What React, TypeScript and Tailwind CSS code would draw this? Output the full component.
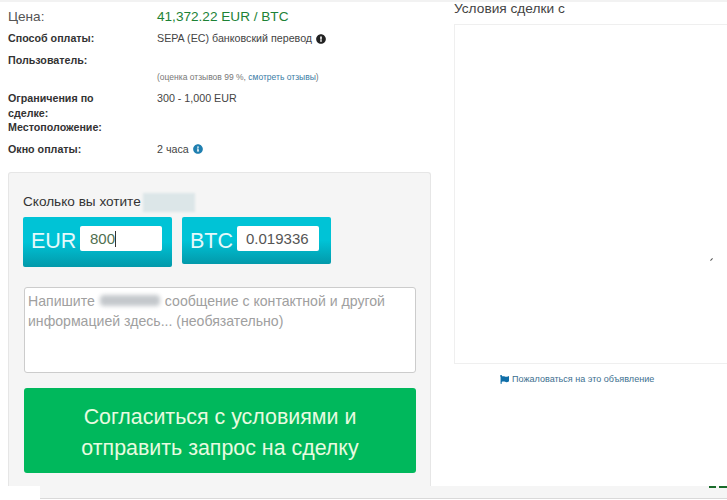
import { FaExclamationCircle, FaFlag, FaInfoCircle } from 'react-icons/fa';

const rowLabel = 'w-[149px] shrink-0 text-[10.7px] font-bold leading-[15px] text-[#333]';
const rowValue = 'text-[10.7px] leading-[15px] text-[#444]';

export default function App() {
  return (
    <div className="flex h-[500px] w-[727px] flex-col overflow-hidden bg-white font-['Liberation_Sans',Arial,sans-serif] text-[#333]">
      <div className="h-[2px] shrink-0 bg-[#f2f2f2]" />

      <div className="flex h-[484px] shrink-0">
        {/* Left column */}
        <div className="w-[446px] shrink-0 pl-2">
          <div className="flex items-center pt-[6px]">
            <div className="w-[149px] shrink-0 text-[13.6px] leading-[17px] text-[#555]">Цена:</div>
            <div className="text-[13.6px] leading-[17px] text-[#1d8236]">41,372.22 EUR / BTC</div>
          </div>

          <div className="mt-[6px] flex">
            <div className={rowLabel}>Способ оплаты:</div>
            <div className={`${rowValue} flex items-center gap-[4px]`}>
              SEPA (ЕС) банковский перевод
              <FaExclamationCircle className="text-[10px] text-[#222]" />
            </div>
          </div>

          <div className="mt-[7px] flex">
            <div className={rowLabel}>Пользователь:</div>
          </div>

          <div className="mt-[4px] flex">
            <div className="w-[149px] shrink-0" />
            <div className="text-[8.5px] leading-[11px] text-[#777]">
              (оценка отзывов 99 %, <span className="text-[#3a7ca5]">смотреть отзывы</span>)
            </div>
          </div>

          <div className="mt-[8px] flex">
            <div className="w-[149px] shrink-0 text-[10.7px] font-bold leading-[14.5px] text-[#333]">
              <div className="w-[100px]">Ограничения по сделке:</div>
              <div>Местоположение:</div>
            </div>
            <div className={rowValue}>300 - 1,000 EUR</div>
          </div>

          <div className="mt-[7px] flex">
            <div className={rowLabel}>Окно оплаты:</div>
            <div className={`${rowValue} flex items-center gap-[4px]`}>
              2 часа
              <FaInfoCircle className="text-[10px] text-[#1f7fb0]" />
            </div>
          </div>

          {/* Trade card */}
          <div className="mt-[15px] h-[314px] w-[423px] rounded-t-[3px] border border-b-0 border-[#e6e6e6] bg-[#f5f5f5] px-[14px] pt-[20px]">
            <div className="flex h-[19px] items-center text-[13.6px] text-[#333]">
              Сколько вы хотите
              <div className="ml-[2px] h-[19px] w-[52px] bg-[#dce6e8] blur-[1px]" />
            </div>

            <div className="mt-[5px] flex items-start gap-[10px]">
              <div className="flex h-[50px] w-[149px] items-start rounded-[2px] bg-gradient-to-b from-[#00c3d6] from-50% to-[#0299aa] pl-[8px] pt-[9px]">
                <span className="mt-px w-[49px] text-[21.5px] leading-[28px] text-[#e6f9fb]">EUR</span>
                <div className="relative">
                  <input
                    readOnly
                    value="800"
                    className="h-[25px] w-[82px] rounded-[2px] bg-white pl-[10px] text-[15px] text-[#4f6f4f] outline-none"
                  />
                  <span className="absolute left-[35px] top-[5px] h-[16px] w-px bg-[#333]" />
                </div>
              </div>

              <div className="flex h-[47px] w-[149px] items-start rounded-[2px] bg-gradient-to-b from-[#00c3d6] from-50% to-[#0299aa] pl-[8px] pt-[9px]">
                <span className="mt-px w-[47px] text-[21.5px] leading-[28px] text-[#e6f9fb]">BTC</span>
                <input
                  readOnly
                  value="0.019336"
                  className="h-[25px] w-[82px] rounded-[2px] bg-white pl-[9px] text-[15px] text-[#555] outline-none"
                />
              </div>
            </div>

            <div className="ml-px mt-[20px] h-[86px] w-[392px] rounded-[3px] border border-[#ccc] bg-white pl-[3px] pt-[3px] text-[14.1px] leading-[20px] text-[#a0a0a0]">
              <div className="flex items-center">
                Напишите
                <span className="mx-[5px] h-[11px] w-[60px] rounded-sm bg-[#c4c8cc] blur-[2px]" />
                сообщение с контактной и другой
              </div>
              <div>информацией здесь... (необязательно)</div>
            </div>

            <button className="ml-px mt-[15px] h-[85px] w-[392px] rounded-[3px] bg-[#00b85c] pt-[5px] text-[21.4px] leading-[31px] text-[#e8fbe0]">
              Согласиться с условиями и
              <br />
              отправить запрос на сделку
            </button>
          </div>
        </div>

        {/* Right column */}
        <div className="ml-2 min-w-0 flex-1">
          <div className="text-[13.7px] leading-[13px] text-[#444]">Условия сделки с</div>
          <div className="relative mt-[9px] h-[340px] w-[300px] border border-[#efefef] bg-white">
            <span className="absolute left-[256px] top-[233px] h-[3px] w-px rotate-45 bg-[#555]" />
          </div>
          <div className="mt-[9px] flex items-center gap-[3px] pl-[46px] text-[9.05px] leading-[12px] text-[#3d6f8f]">
            <FaFlag className="text-[9px] text-[#0f6ea8]" />
            Пожаловаться на это объявление
          </div>
        </div>
      </div>

      <div className="relative ml-[40px] h-[13px] shrink-0 border-b border-[#d9d9d9] bg-[#f5f5f5]">
        <span className="absolute left-[669px] top-0 h-[2px] w-[7px] bg-[#1a6b2a]" />
        <span className="absolute left-[679px] top-0 h-[2px] w-[8px] bg-[#1a6b2a]" />
      </div>
    </div>
  );
}
